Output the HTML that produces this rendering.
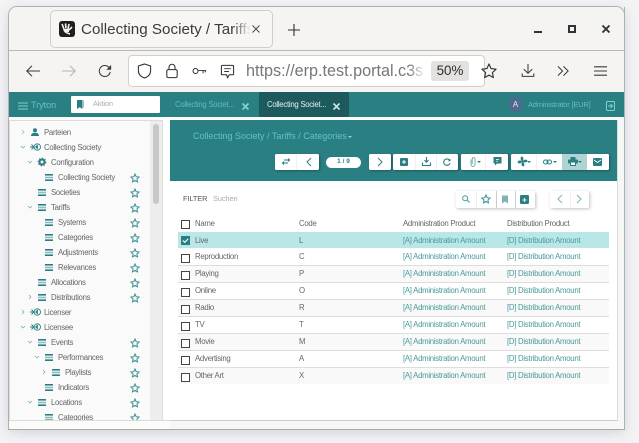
<!DOCTYPE html>
<html><head><meta charset="utf-8"><style>
*{box-sizing:border-box}
html,body{margin:0;padding:0;width:639px;height:443px;overflow:hidden;background:#f3f3f6;font-family:"Liberation Sans",sans-serif}
.a{position:absolute}
.t{position:absolute;white-space:nowrap;font-size:7.8px;letter-spacing:-.28px;line-height:10px;color:#666;margin-top:1px}
.b{letter-spacing:0;margin-top:0}
.g{position:absolute;background:#fff;border-radius:1.5px;box-shadow:1px 1px 2px rgba(0,0,0,.3);height:16px}
.sep{position:absolute;top:0;bottom:0;width:1px;background:#f0f0f0}
svg{position:absolute;overflow:visible}
svg[width="8"][height="6"]{margin-top:-.7px;height:7px}
.cb{position:absolute;left:181px;width:9px;height:9px;border:1px solid #444;background:#fff}
.l{color:#4b9a9d}
.row{position:absolute;left:178px;width:431px;height:17px;border-bottom:1px solid #ddd}
</style></head><body>
<svg width="0" height="0" style="position:absolute"><defs>
<symbol id="m" viewBox="0 0 8 7" preserveAspectRatio="none"><rect width="8" height="1.600" y="0" fill="#2a7f82"/><rect width="8" height="1.600" y="2.700" fill="#8fbcbd"/><rect width="8" height="1.600" y="5.400" fill="#2a7f82"/></symbol>
<symbol id="s" viewBox="0 0 10 10"><path d="M5 1l1.200 2.700 2.900.3-2.200 2 .6 2.900L5 7.400 2.500 8.900l.6-2.900L.9 4l2.900-.3z" fill="none" stroke="#3a9093" stroke-width="1"/></symbol>
<symbol id="cs" viewBox="0 0 11 8"><path d="M0 4h4M1.500 1.500L4 4 1.500 6.500" fill="none" stroke="#2a7f82" stroke-width=".9"/><circle cx="7.300" cy="4" r="3.200" fill="none" stroke="#2a7f82" stroke-width=".9"/><path d="M5 4l2.800-2.600v5.200z" fill="#2a7f82"/></symbol>
</defs></svg>

<!-- window -->
<div class="a" style="left:8px;top:6px;width:617px;height:424px;background:#fff;border:1px solid #b0b0b0;border-radius:9px 9px 0 0;box-shadow:0 3px 12px rgba(0,0,0,.12);overflow:hidden"></div>
<div class="a" style="left:9px;top:7px;width:615px;height:44px;background:#f5f4f2;border-bottom:1px solid #b9b8b6;border-radius:8px 8px 0 0"></div>
<div class="a" style="left:9px;top:51px;width:615px;height:41px;background:#f5f4f2"></div>

<!-- tab -->
<div class="a" style="left:50px;top:10px;width:223px;height:38px;background:#f7f6f4;border:1px solid #cfcecb;border-radius:5px"></div>
<div class="a" style="left:59px;top:21px;width:16px;height:16px;background:#1f1f1c;border-radius:3px"></div>
<svg style="left:59px;top:21px" width="16" height="16" viewBox="0 0 16 16"><path d="M3 3l2 5 M6.500 2.500l.5 5 M10 3l-1 5 M13 6l-3 3 M5 8c0 3 3 4 6 5" stroke="#f5f4f2" stroke-width="1.600" fill="none"/><path d="M5 8l5 0 0 3-3 0z" fill="#f5f4f2"/></svg>
<div class="t b" style="left:81px;top:21px;font-size:15.200px;line-height:18px;color:#3c3c3a;width:172px;overflow:hidden">Collecting Society / Tariffs</div>
<div class="a" style="left:232px;top:20px;width:21px;height:18px;background:linear-gradient(90deg,rgba(247,246,244,0),#f7f6f4 90%)"></div>
<svg style="left:252px;top:25px" width="8" height="8" viewBox="0 0 8 8"><path d="M.5.5l7 7M7.500.5l-7 7" stroke="#3c3c3a" stroke-width=".9"/></svg>
<svg style="left:288px;top:24px" width="12" height="12" viewBox="0 0 12 12"><path d="M6 0v12M0 6h12" stroke="#2e2e2c" stroke-width="1.100"/></svg>

<!-- window controls -->
<div class="a" style="left:534px;top:31px;width:8px;height:2px;background:#2e3436"></div>
<div class="a" style="left:568px;top:25px;width:8px;height:8px;border:2px solid #2e3436"></div>
<svg style="left:602px;top:25px" width="8" height="8" viewBox="0 0 8 8"><path d="M.5.5l7 7M7.500.5l-7 7" stroke="#2e3436" stroke-width="1.900"/></svg>

<!-- nav -->
<svg style="left:26px;top:65px" width="14" height="12" viewBox="0 0 14 12"><path d="M14 6H1M6 .8L.8 6 6 11.200" fill="none" stroke="#3a3a38" stroke-width="1.050"/></svg>
<svg style="left:62px;top:65px" width="14" height="12" viewBox="0 0 14 12"><path d="M0 6h13M8 .8L13.200 6 8 11.200" fill="none" stroke="#b5b5b3" stroke-width="1.050"/></svg>
<svg style="left:98px;top:64px" width="14" height="14" viewBox="0 0 16 16"><path d="M14 9a6.300 6.300 0 1 1-1.800-5.500L14 5.500" fill="none" stroke="#3a3a38" stroke-width="1.200"/><path d="M15 1v5.500H9.500z" fill="#3a3a38"/></svg>
<div class="a" style="left:128px;top:55px;width:357px;height:32px;background:#fff;border:1px solid #d4d0c8;border-radius:4px"></div>
<svg style="left:137px;top:63px" width="15" height="16" viewBox="0 0 16 17"><path d="M8 1l6.500 2.200v5c0 4-3 6.500-6.500 7.800-3.500-1.300-6.500-3.800-6.500-7.800v-5z" fill="none" stroke="#2e2e2c" stroke-width="1.100"/></svg>
<svg style="left:165px;top:63px" width="14" height="16" viewBox="0 0 14 17"><rect x="1.500" y="7" width="11" height="8.500" rx="1.500" fill="none" stroke="#2e2e2c" stroke-width="1.100"/><path d="M3.800 7V4.500a3.200 3.200 0 0 1 6.400 0V7" fill="none" stroke="#2e2e2c" stroke-width="1.100"/></svg>
<svg style="left:192px;top:67px" width="15" height="8" viewBox="0 0 16 9"><circle cx="3.500" cy="4.500" r="2.800" fill="none" stroke="#2e2e2c" stroke-width="1.100"/><path d="M6.500 4h9M12 4v3M14.500 4v2" fill="none" stroke="#2e2e2c" stroke-width="1.100"/></svg>
<svg style="left:220px;top:64px" width="15" height="15" viewBox="0 0 16 16"><path d="M2.500 1.500h11a1 1 0 0 1 1 1v8a1 1 0 0 1-1 1H10l-2 3-1-3H2.500a1 1 0 0 1-1-1v-8a1 1 0 0 1 1-1z" fill="none" stroke="#2e2e2c" stroke-width="1.100"/><path d="M4.500 5h7M4.500 8h5" stroke="#2e2e2c" stroke-width="1"/></svg>
<div class="t b" style="left:246px;top:61px;font-size:16.200px;line-height:20px;color:#77767b;width:180px;overflow:hidden">https://erp.test.portal.c3s</div>
<div class="a" style="left:408px;top:58px;width:18px;height:26px;background:linear-gradient(90deg,rgba(255,255,255,0),#fff)"></div>
<div class="a" style="left:431px;top:61px;width:38px;height:20px;background:#e2e1df;border-radius:3px"></div>
<div class="t b" style="left:431px;top:62px;width:38px;text-align:center;font-size:13.400px;line-height:18px;color:#2e2e2c">50%</div>
<svg style="left:481px;top:63px" width="16" height="16" viewBox="0 0 16 16"><path d="M8 1l2.100 4.600 5 .6-3.700 3.400 1 5L8 12.100 3.600 14.600l1-5L.9 6.200l5-.6z" fill="none" stroke="#2e2e2c" stroke-width="1.100" stroke-linejoin="round"/></svg>
<svg style="left:521px;top:63px" width="14" height="15" viewBox="0 0 14 16"><path d="M7 1v10M2.500 6.500L7 11l4.500-4.500M.8 11v3.300h12.400V11" fill="none" stroke="#3a3a38" stroke-width="1.100"/></svg>
<svg style="left:557px;top:65px" width="13" height="12" viewBox="0 0 14 12"><path d="M1 1l5 5-5 5M7 1l5 5-5 5" fill="none" stroke="#3a3a38" stroke-width="1.100"/></svg>
<svg style="left:594px;top:66px" width="13" height="10" viewBox="0 0 13 10"><path d="M0 .8h13M0 5h13M0 9.200h13" stroke="#3a3a38" stroke-width="1.100"/></svg>

<!-- teal nav -->
<div class="a" style="left:9px;top:92px;width:615px;height:25px;background:#2a7f82"></div>
<svg style="left:18px;top:102px" width="10" height="8" viewBox="0 0 10 8"><path d="M0 1h10M0 4h10M0 7h10" stroke="#7fd0d0" stroke-width="1"/></svg>
<div class="t b" style="left:31px;top:99px;font-size:9px;line-height:12px;color:#66c3c4">Tryton</div>
<div class="a" style="left:71px;top:96px;width:89px;height:17px;background:#fff;border-radius:1px"></div>
<svg style="left:76px;top:99px" width="9" height="11" viewBox="0 0 9 11"><path d="M1 1h5.500v9L3.700 8.200 1 10z" fill="#2a7f82"/><path d="M7.500 1.500v7" stroke="#999" stroke-width=".7"/></svg>
<div class="t" style="left:93px;top:99px;color:#aaa;font-size:7.400px;letter-spacing:-.1px;margin-top:0">Aktion</div>
<div class="t" style="left:175px;top:99px;color:#5cbcbd">Collecting Societ...</div>
<svg style="left:242px;top:103px" width="7" height="7" viewBox="0 0 7 7"><path d="M.5.5l6 6M6.500.5l-6 6" stroke="#8cd0d0" stroke-width="1.600"/></svg>
<div class="a" style="left:259px;top:92px;width:90px;height:25px;background:#1c5a5d;border-radius:2px"></div>
<div class="t" style="left:267px;top:99px;color:#e2f0f0">Collecting Societ...</div>
<svg style="left:333px;top:103px" width="7" height="7" viewBox="0 0 7 7"><path d="M.5.5l6 6M6.500.5l-6 6" stroke="#cfe3e3" stroke-width="1.600"/></svg>
<div class="a" style="left:508px;top:97px;width:15px;height:15px;border-radius:50%;background:#4d6a90"></div>
<div class="t b" style="left:508px;top:100px;width:15px;text-align:center;color:#e6eef2;font-size:8px">A</div>
<div class="t" style="left:528px;top:100px;color:#63bfc0;font-size:7.500px;letter-spacing:-.2px;margin-top:0">Administrator [EUR]</div>
<svg style="left:606px;top:101px" width="9" height="10" viewBox="0 0 9 10"><rect x=".5" y=".5" width="8" height="9" rx="1" fill="none" stroke="#7fd0d0"/><path d="M2 5h4M4.500 3l2 2-2 2" fill="none" stroke="#7fd0d0"/></svg>

<!-- sidebar -->
<div class="a" style="left:9px;top:117px;width:615px;height:312px;background:#f7f7f6"></div>
<div class="a" style="left:9px;top:120px;width:154px;height:301px;background:#fafafa;border:1px solid #dcdcda"></div>
<div class="a" style="left:150px;top:121px;width:12px;height:299px;background:#eeedeb"></div>
<div class="a" style="left:153px;top:124px;width:6px;height:80px;background:#c8c8c6;border-radius:3px"></div>
<div class="a" style="left:163px;top:117px;width:7px;height:312px;background:#fff"></div>
<div class="a" style="left:9px;top:117px;width:615px;height:3px;background:#fbfbfa"></div>

<svg style="left:20px;top:129px" width="6" height="6" viewBox="0 0 6 6"><path d="M2 1l2 2-2 2" fill="none" stroke="#8bb" stroke-width=".7"/></svg>
<svg style="left:31px;top:128px" width="8" height="8" viewBox="0 0 8 8"><circle cx="4" cy="2.200" r="2" fill="#2a7f82"/><path d="M0 8c0-2.500 2-3.200 4-3.200S8 5.500 8 8z" fill="#2a7f82"/></svg>
<div class="t" style="left:44px;top:127px">Parteien</div>

<svg style="left:20px;top:144px" width="6" height="6" viewBox="0 0 6 6"><path d="M1 2l2 2 2-2" fill="none" stroke="#6aa" stroke-width=".7"/></svg>
<svg style="left:30px;top:143px" width="11" height="8"><use href="#cs"/></svg>
<div class="t" style="left:44px;top:142px">Collecting Society</div>

<svg style="left:27px;top:159px" width="6" height="6" viewBox="0 0 6 6"><path d="M1 2l2 2 2-2" fill="none" stroke="#6aa" stroke-width=".7"/></svg>
<svg style="left:38px;top:158px" width="8" height="8" viewBox="0 0 8 8"><circle cx="4" cy="4" r="2.500" fill="none" stroke="#2a7f82" stroke-width="2"/><circle cx="4" cy="4" r="3.900" fill="none" stroke="#2a7f82" stroke-width="1" stroke-dasharray="1.500 1.500"/></svg>
<div class="t" style="left:51px;top:157px">Configuration</div>

<svg style="left:45px;top:175px" width="8" height="6"><use href="#m"/></svg>
<div class="t" style="left:58px;top:172px">Collecting Society</div>
<svg style="left:130px;top:173px" width="10" height="10"><use href="#s"/></svg>

<svg style="left:38px;top:190px" width="8" height="6"><use href="#m"/></svg>
<div class="t" style="left:51px;top:187px">Societies</div>
<svg style="left:130px;top:188px" width="10" height="10"><use href="#s"/></svg>

<svg style="left:27px;top:204px" width="6" height="6" viewBox="0 0 6 6"><path d="M1 2l2 2 2-2" fill="none" stroke="#6aa" stroke-width=".7"/></svg>
<svg style="left:38px;top:205px" width="8" height="6"><use href="#m"/></svg>
<div class="t" style="left:51px;top:202px">Tariffs</div>
<svg style="left:130px;top:203px" width="10" height="10"><use href="#s"/></svg>

<svg style="left:45px;top:220px" width="8" height="6"><use href="#m"/></svg>
<div class="t" style="left:58px;top:217px">Systems</div>
<svg style="left:130px;top:218px" width="10" height="10"><use href="#s"/></svg>

<svg style="left:45px;top:235px" width="8" height="6"><use href="#m"/></svg>
<div class="t" style="left:58px;top:232px">Categories</div>
<svg style="left:130px;top:233px" width="10" height="10"><use href="#s"/></svg>

<svg style="left:45px;top:250px" width="8" height="6"><use href="#m"/></svg>
<div class="t" style="left:58px;top:247px">Adjustments</div>
<svg style="left:130px;top:248px" width="10" height="10"><use href="#s"/></svg>

<svg style="left:45px;top:265px" width="8" height="6"><use href="#m"/></svg>
<div class="t" style="left:58px;top:262px">Relevances</div>
<svg style="left:130px;top:263px" width="10" height="10"><use href="#s"/></svg>

<svg style="left:38px;top:280px" width="8" height="6"><use href="#m"/></svg>
<div class="t" style="left:51px;top:277px">Allocations</div>
<svg style="left:130px;top:278px" width="10" height="10"><use href="#s"/></svg>

<svg style="left:27px;top:294px" width="6" height="6" viewBox="0 0 6 6"><path d="M2 1l2 2-2 2" fill="none" stroke="#6aa" stroke-width=".7"/></svg>
<svg style="left:38px;top:295px" width="8" height="6"><use href="#m"/></svg>
<div class="t" style="left:51px;top:292px">Distributions</div>
<svg style="left:130px;top:293px" width="10" height="10"><use href="#s"/></svg>

<svg style="left:20px;top:309px" width="6" height="6" viewBox="0 0 6 6"><path d="M2 1l2 2-2 2" fill="none" stroke="#6aa" stroke-width=".7"/></svg>
<svg style="left:30px;top:308px" width="11" height="8"><use href="#cs"/></svg>
<div class="t" style="left:44px;top:307px">Licenser</div>

<svg style="left:20px;top:324px" width="6" height="6" viewBox="0 0 6 6"><path d="M1 2l2 2 2-2" fill="none" stroke="#6aa" stroke-width=".7"/></svg>
<svg style="left:30px;top:323px" width="11" height="8"><use href="#cs"/></svg>
<div class="t" style="left:44px;top:322px">Licensee</div>

<svg style="left:27px;top:339px" width="6" height="6" viewBox="0 0 6 6"><path d="M1 2l2 2 2-2" fill="none" stroke="#6aa" stroke-width=".7"/></svg>
<svg style="left:38px;top:340px" width="8" height="6"><use href="#m"/></svg>
<div class="t" style="left:51px;top:337px">Events</div>
<svg style="left:130px;top:338px" width="10" height="10"><use href="#s"/></svg>

<svg style="left:34px;top:354px" width="6" height="6" viewBox="0 0 6 6"><path d="M1 2l2 2 2-2" fill="none" stroke="#6aa" stroke-width=".7"/></svg>
<svg style="left:45px;top:355px" width="8" height="6"><use href="#m"/></svg>
<div class="t" style="left:58px;top:352px">Performances</div>
<svg style="left:130px;top:353px" width="10" height="10"><use href="#s"/></svg>

<svg style="left:41px;top:369px" width="6" height="6" viewBox="0 0 6 6"><path d="M2 1l2 2-2 2" fill="none" stroke="#6aa" stroke-width=".7"/></svg>
<svg style="left:52px;top:370px" width="8" height="6"><use href="#m"/></svg>
<div class="t" style="left:65px;top:367px">Playlists</div>
<svg style="left:130px;top:368px" width="10" height="10"><use href="#s"/></svg>

<svg style="left:45px;top:385px" width="8" height="6"><use href="#m"/></svg>
<div class="t" style="left:58px;top:382px">Indicators</div>
<svg style="left:130px;top:383px" width="10" height="10"><use href="#s"/></svg>

<svg style="left:27px;top:399px" width="6" height="6" viewBox="0 0 6 6"><path d="M1 2l2 2 2-2" fill="none" stroke="#6aa" stroke-width=".7"/></svg>
<svg style="left:38px;top:400px" width="8" height="6"><use href="#m"/></svg>
<div class="t" style="left:51px;top:397px">Locations</div>
<svg style="left:130px;top:398px" width="10" height="10"><use href="#s"/></svg>

<svg style="left:45px;top:415px" width="8" height="6"><use href="#m"/></svg>
<div class="t" style="left:58px;top:412px">Categories</div>
<svg style="left:130px;top:413px" width="10" height="10"><use href="#s"/></svg>
<div class="a" style="left:9px;top:420px;width:161px;height:9px;background:#fbfbfa;border-top:1px solid #dcdcda"></div>

<!-- main card -->
<div class="a" style="left:170px;top:120px;width:448px;height:301px;background:#fff;border-right:1px solid #ddd;border-bottom:1px solid #ccc"></div>
<div class="a" style="left:170px;top:120px;width:447px;height:61px;background:#2a7f82"></div>
<div class="t b" style="left:193px;top:130px;font-size:9px;line-height:12px;color:#62c2c3">Collecting Society / Tariffs / Categories</div>
<div class="a" style="left:348px;top:136px;border:2px solid transparent;border-top-color:#8fd4d4"></div>

<!-- toolbar -->
<div class="g" style="left:275px;top:154px;width:44px"><div class="sep" style="left:21px"></div></div>
<svg style="left:282px;top:158px" width="8" height="7" viewBox="0 0 8 7"><path d="M0 5h6M2 3.500L.5 5 2 6.500M8 2H2M6 .5L7.500 2 6 3.500" fill="none" stroke="#2a7f82" stroke-width="1"/></svg>
<svg style="left:306px;top:157px" width="6" height="10" viewBox="0 0 6 10"><path d="M5 1L1 5l4 4" fill="none" stroke="#2a7f82"/></svg>
<div class="a" style="left:326px;top:157px;width:35px;height:11px;background:#fff;border-radius:6px"></div>
<div class="t b" style="left:326px;top:157px;width:35px;text-align:center;color:#2a7f82;font-size:6.500px;font-weight:bold">1 / 9</div>
<div class="g" style="left:369px;top:154px;width:22px"></div>
<svg style="left:377px;top:157px" width="6" height="10" viewBox="0 0 6 10"><path d="M1 1l4 4-4 4" fill="none" stroke="#2a7f82"/></svg>
<div class="g" style="left:393px;top:154px;width:65px"><div class="sep" style="left:22px"></div><div class="sep" style="left:43px"></div></div>
<svg style="left:400px;top:158px" width="8" height="8" viewBox="0 0 8 8"><rect width="8" height="8" rx="1" fill="#2a7f82"/><path d="M4 2v4M2 4h4" stroke="#fff"/></svg>
<svg style="left:422px;top:157px" width="9" height="9" viewBox="0 0 9 9"><path d="M4.500 0v5M2.500 3.200l2 2 2-2" fill="none" stroke="#2a7f82" stroke-width="1.100"/><path d="M.5 5.500v3h8v-3" fill="none" stroke="#2a7f82" stroke-width="1.100"/></svg>
<svg style="left:443px;top:158px" width="8" height="8" viewBox="0 0 8 8"><path d="M7 5a3.200 3.200 0 1 1-.7-3" fill="none" stroke="#2a7f82" stroke-width="1.100"/><path d="M7.500.5v2.800H5z" fill="#2a7f82"/></svg>
<div class="g" style="left:461px;top:154px;width:47px"><div class="sep" style="left:24px"></div></div>
<svg style="left:470px;top:157px" width="6" height="10" viewBox="0 0 6 10"><path d="M1 2.500v5a2 2 0 0 0 4 0V2a1.400 1.400 0 0 0-2.800 0v5" fill="none" stroke="#6aa6a8" stroke-width=".9"/></svg>
<div class="a" style="left:477px;top:161px;border:2px solid transparent;border-top:2px solid #2a7f82"></div>
<svg style="left:493px;top:157px" width="9" height="9" viewBox="0 0 9 9"><path d="M.500 0h8v6.500H4L2 8.500V6.500H.500z" fill="#2a7f82"/><path d="M3 2.500h3M3 4.200h2" stroke="#fff" stroke-width=".7"/></svg>
<div class="g" style="left:511px;top:154px;width:98px"><div class="sep" style="left:25px"></div><div class="a" style="left:51px;top:0;width:25px;height:16px;background:#b0d3d3"></div></div>
<svg style="left:517px;top:156px" width="11" height="11" viewBox="0 0 10 10"><path d="M5 5C3.500 4 2.500 2 4 .5c2 0 2.500 2.500 1 4.500zM5 5c1-1.500 3-2.500 4.500-1 0 2-2.500 2.500-4.500 1zM5 5c1.500 1 2.500 3 1 4.500C4 9.500 3.500 7 5 5zM5 5C4 6.500 2 7.500.5 6c0-2 2.500-2.500 4.500-1z" fill="#2a7f82"/></svg>
<div class="a" style="left:527px;top:161px;border:2px solid transparent;border-top:2px solid #2a7f82"></div>
<svg style="left:543px;top:159px" width="9" height="6" viewBox="0 0 9 6"><rect x=".5" y="1" width="4.500" height="4" rx="2" fill="none" stroke="#2a7f82"/><rect x="4" y="1" width="4.500" height="4" rx="2" fill="none" stroke="#2a7f82"/></svg>
<div class="a" style="left:553px;top:161px;border:2px solid transparent;border-top:2px solid #2a7f82"></div>
<svg style="left:568px;top:157px" width="10" height="9" viewBox="0 0 10 9"><rect x="2.500" y="0" width="5" height="3" fill="#2a7f82"/><rect x="0" y="2.500" width="10" height="4" rx="1" fill="#2a7f82"/><rect x="2.500" y="5" width="5" height="3.500" fill="#fff" stroke="#2a7f82"/></svg>
<div class="a" style="left:578px;top:161px;border:2px solid transparent;border-top:2px solid #2a7f82"></div>
<svg style="left:593px;top:158px" width="9" height="8" viewBox="0 0 9 8"><rect width="9" height="8" rx="1" fill="#2a7f82"/><path d="M1 2l3.500 2.500L8 2" fill="none" stroke="#fff" stroke-width=".9"/></svg>

<!-- filter -->
<div class="t" style="left:183px;top:193.500px;font-size:7.400px;letter-spacing:-.1px;color:#555;margin-top:0">FILTER</div>
<div class="t" style="left:213px;top:193.500px;font-size:7.400px;letter-spacing:-.1px;color:#aaa;margin-top:0">Suchen</div>
<div class="g" style="left:456px;top:191px;width:79px;height:17px;box-shadow:1px 1px 3px rgba(0,0,0,.25)"><div class="sep" style="left:20px"></div><div class="sep" style="left:40px;background:#ccc"></div><div class="sep" style="left:59px;background:#ccc"></div></div>
<svg style="left:462px;top:195px" width="8" height="8" viewBox="0 0 8 8"><circle cx="3.200" cy="3.200" r="2.500" fill="none" stroke="#4b9a9d"/><path d="M5 5l2.600 2.600" stroke="#4b9a9d" stroke-width="1.100"/></svg>
<svg style="left:481px;top:194px" width="10" height="10"><use href="#s"/></svg>
<svg style="left:501px;top:195px" width="8" height="9" viewBox="0 0 8 9"><path d="M1 .5h6v8L4 6.500 1 8.500z" fill="#7fb3b5"/></svg>
<svg style="left:520px;top:195px" width="9" height="9" viewBox="0 0 9 9"><rect width="9" height="9" rx="1.200" fill="#2a7f82"/><path d="M4.500 3v4M2.500 5h4" stroke="#fff"/></svg>
<div class="g" style="left:550px;top:191px;width:39px;height:17px;box-shadow:1px 1px 3px rgba(0,0,0,.25)"><div class="sep" style="left:20px"></div></div>
<svg style="left:557px;top:194px" width="6" height="10" viewBox="0 0 6 10"><path d="M5 1L1 5l4 4" fill="none" stroke="#7fb3b5"/></svg>
<svg style="left:576px;top:194px" width="6" height="10" viewBox="0 0 6 10"><path d="M1 1l4 4-4 4" fill="none" stroke="#7fb3b5"/></svg>

<!-- table header -->
<div class="cb" style="top:220px"></div>
<div class="t" style="left:195px;top:218px">Name</div>
<div class="t" style="left:299px;top:218px">Code</div>
<div class="t" style="left:403px;top:218px">Administration Product</div>
<div class="t" style="left:507px;top:218px">Distribution Product</div>

<!-- rows -->
<div class="row" style="top:232px;background:#b9e7e7;height:16px;border:0"></div>
<div class="a" style="left:181px;top:236px;width:9px;height:9px;background:#2a7f82"></div>
<svg style="left:182px;top:238px" width="7" height="5" viewBox="0 0 7 5"><path d="M.8 2.500l2 1.800L6.200.7" fill="none" stroke="#fff" stroke-width="1.100"/></svg>
<div class="t" style="left:195px;top:234.500px">Live</div><div class="t" style="left:299px;top:234.500px">L</div>
<div class="t l" style="left:403px;top:234.500px">[A] Administration Amount</div><div class="t l" style="left:507px;top:234.500px">[D] Distribution Amount</div>

<div class="row" style="top:248px;height:18px"></div>
<div class="cb" style="top:254px"></div>
<div class="t" style="left:195px;top:251px">Reproduction</div><div class="t" style="left:299px;top:251px">C</div>
<div class="t l" style="left:403px;top:251px">[A] Administration Amount</div><div class="t l" style="left:507px;top:251px">[D] Distribution Amount</div>

<div class="row" style="top:266px;background:#f9f9f9"></div>
<div class="cb" style="top:271px"></div>
<div class="t" style="left:195px;top:268px">Playing</div><div class="t" style="left:299px;top:268px">P</div>
<div class="t l" style="left:403px;top:268px">[A] Administration Amount</div><div class="t l" style="left:507px;top:268px">[D] Distribution Amount</div>

<div class="row" style="top:283px"></div>
<div class="cb" style="top:288px"></div>
<div class="t" style="left:195px;top:285px">Online</div><div class="t" style="left:299px;top:285px">O</div>
<div class="t l" style="left:403px;top:285px">[A] Administration Amount</div><div class="t l" style="left:507px;top:285px">[D] Distribution Amount</div>

<div class="row" style="top:300px;background:#f9f9f9"></div>
<div class="cb" style="top:305px"></div>
<div class="t" style="left:195px;top:302px">Radio</div><div class="t" style="left:299px;top:302px">R</div>
<div class="t l" style="left:403px;top:302px">[A] Administration Amount</div><div class="t l" style="left:507px;top:302px">[D] Distribution Amount</div>

<div class="row" style="top:317px"></div>
<div class="cb" style="top:322px"></div>
<div class="t" style="left:195px;top:319px">TV</div><div class="t" style="left:299px;top:319px">T</div>
<div class="t l" style="left:403px;top:319px">[A] Administration Amount</div><div class="t l" style="left:507px;top:319px">[D] Distribution Amount</div>

<div class="row" style="top:334px;background:#f9f9f9"></div>
<div class="cb" style="top:339px"></div>
<div class="t" style="left:195px;top:336px">Movie</div><div class="t" style="left:299px;top:336px">M</div>
<div class="t l" style="left:403px;top:336px">[A] Administration Amount</div><div class="t l" style="left:507px;top:336px">[D] Distribution Amount</div>

<div class="row" style="top:351px"></div>
<div class="cb" style="top:356px"></div>
<div class="t" style="left:195px;top:353px">Advertising</div><div class="t" style="left:299px;top:353px">A</div>
<div class="t l" style="left:403px;top:353px">[A] Administration Amount</div><div class="t l" style="left:507px;top:353px">[D] Distribution Amount</div>

<div class="row" style="top:368px;height:16px;background:#f9f9f9;border:0"></div>
<div class="cb" style="top:373px"></div>
<div class="t" style="left:195px;top:370px">Other Art</div><div class="t" style="left:299px;top:370px">X</div>
<div class="t l" style="left:403px;top:370px">[A] Administration Amount</div><div class="t l" style="left:507px;top:370px">[D] Distribution Amount</div>

<!-- bottom of window -->
<div class="a" style="left:170px;top:421px;width:454px;height:8px;background:#f7f7f6"></div>
<div class="a" style="left:618px;top:117px;width:6px;height:312px;background:#f7f7f6"></div>
<div class="a" style="left:8px;top:429px;width:617px;height:1px;background:#aaa"></div>
<div class="a" style="left:624px;top:7px;width:1px;height:423px;background:#b0b0b0"></div>
</body></html>
